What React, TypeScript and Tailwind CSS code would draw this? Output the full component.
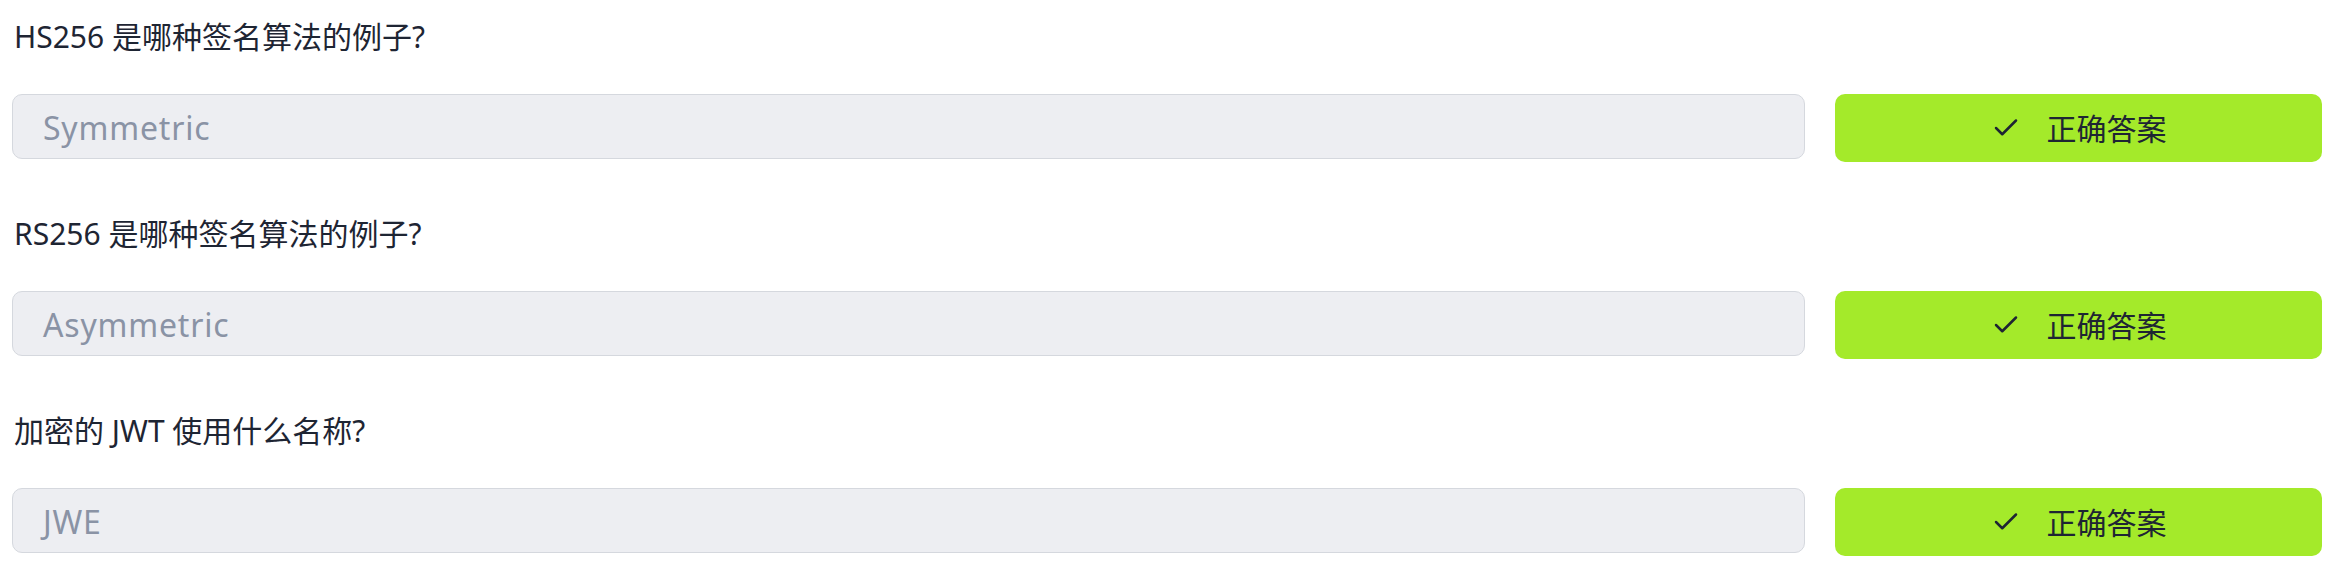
import React from "react";
import { Check } from "lucide-react";

const items = [
  { q: "HS256 是哪种签名算法的例子?", a: "Symmetric" },
  { q: "RS256 是哪种签名算法的例子?", a: "Asymmetric" },
  { q: "加密的 JWT 使用什么名称?", a: "JWE" },
];

export default function App() {
  return (
    <div
      className="w-[2328px] h-[575px] bg-white pl-[12px] pr-[6px] pt-[15px] flex flex-col gap-[50px]"
      style={{ fontFamily: '"Noto Sans", "Noto Sans CJK SC", sans-serif' }}
    >
      {items.map((it) => (
        <div key={it.q} className="flex flex-col gap-[35px]">
          <div className="h-[44px] leading-[44px] text-[30px] text-[#1e2533] pl-[2px]">{it.q}</div>
          <div className="flex items-start gap-[30px]">
            <div className="flex-1 h-[65px] rounded-[10px] border border-[#d5d8de] bg-[#edeef2] flex items-center pl-[30px] pt-[2px] text-[32px] tracking-wide text-[#8a93a5]">
              {it.a}
            </div>
            <button className="w-[487px] h-[68px] rounded-[10px] bg-[#a4ea2a] flex items-center justify-center gap-[26px] text-[30px] text-[#1e2533]">
              <Check size={30} strokeWidth={2} />
              <span>正确答案</span>
            </button>
          </div>
        </div>
      ))}
    </div>
  );
}
